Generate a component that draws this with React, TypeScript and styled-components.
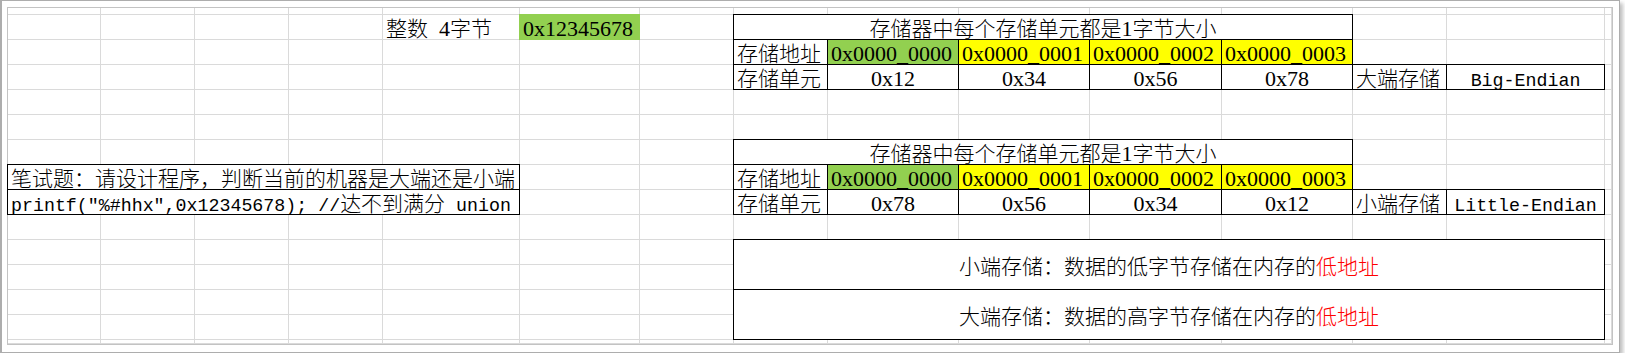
import React from "react";
import styled, { createGlobalStyle, css } from "styled-components";

const GlobalStyle = createGlobalStyle`
  body {
    margin: 0;
    background: #fff;
  }
`;

const COL_WIDTHS = [93, 94, 94, 94, 137, 120, 94, 94, 131, 131, 132, 131, 94, 158, 7];
const ROW_HEIGHTS = [7, 25, 25, 25, 25, 25, 25, 25, 25, 25, 25, 25, 25, 25, 4];

const GREEN = "#92d050";
const YELLOW = "#ffff00";
const GRID = "#dadada";

type Kind = "plain" | "filled" | "boxed";

type Spec = {
  r: number;
  c: number;
  rs?: number;
  cs?: number;
  kind: Kind;
  fill?: string;
  align?: "left" | "center";
  tall?: boolean;
  content: React.ReactNode;
};

const Frame = styled.div`
  box-sizing: border-box;
  width: 1620px;
  height: 353px;
  padding: 6px 6px 7px 5px;
  border: 1px solid #adadad;
  border-left-width: 2px;
  background: #fff;
  box-shadow: 3px 3px 4px rgba(0, 0, 0, 0.25);
`;

const Sheet = styled.div`
  display: grid;
  width: max-content;
  grid-template-columns: ${COL_WIDTHS.map((w) => `${w}px`).join(" ")};
  grid-template-rows: ${ROW_HEIGHTS.map((h) => `${h}px`).join(" ")};
  border: 1px solid #c3c3c3;
  background: #fff;
`;

const GridCell = styled.div`
  box-sizing: border-box;
  border-right: 1px solid ${GRID};
  border-bottom: 1px solid ${GRID};
`;

const DataCell = styled.div<{
  $r: number;
  $c: number;
  $rs: number;
  $cs: number;
  $kind: Kind;
  $fill?: string;
  $align: "left" | "center";
  $tall?: boolean;
}>`
  grid-row: ${(p) => p.$r + 1} / span ${(p) => p.$rs};
  grid-column: ${(p) => p.$c + 1} / span ${(p) => p.$cs};
  box-sizing: border-box;
  min-width: 0;
  padding: 0 3px;
  font-family: "Noto Sans CJK SC", sans-serif;
  font-size: 21px;
  font-weight: 300;
  line-height: 24px;
  color: #000;
  white-space: pre;
  text-align: ${(p) => p.$align};
  background: ${(p) => p.$fill ?? "#fff"};
  ${(p) =>
    p.$kind === "plain"
      ? css`
          border-right: 1px solid ${GRID};
          border-bottom: 1px solid ${GRID};
        `
      : css`
          margin: -1px 0 0 -1px;
          border: 1px solid ${p.$kind === "boxed" ? "#000" : p.$fill};
        `}
  ${(p) =>
    p.$tall &&
    css`
      display: flex;
      align-items: center;
      justify-content: center;
    `}
`;

// digits and hex numbers: serif, half-width
const Latin = styled.span`
  font-family: "Liberation Serif", serif;
  font-size: 22px;
  font-weight: 400;
  word-spacing: 0.25em;
`;

// letter runs: monospaced so they keep the half-width grid
const Mono = styled.span`
  font-family: "Liberation Mono", monospace;
  font-size: 18.3px;
  font-weight: 400;
`;

const Red = styled.span`
  color: #ff0000;
`;

const ADDRESSES = ["0x0000_0000", "0x0000_0001", "0x0000_0002", "0x0000_0003"];

const memoryTable = (top: number, values: string[], label: string, endian: string): Spec[] => [
  {
    r: top,
    c: 7,
    cs: 5,
    kind: "boxed",
    align: "center",
    content: (
      <>
        存储器中每个存储单元都是<Latin>1</Latin>字节大小
      </>
    ),
  },
  { r: top + 1, c: 7, kind: "boxed", content: "存储地址" },
  ...ADDRESSES.map<Spec>((a, i) => ({
    r: top + 1,
    c: 8 + i,
    kind: "boxed",
    fill: i === 0 ? GREEN : YELLOW,
    content: <Latin>{a}</Latin>,
  })),
  { r: top + 2, c: 7, kind: "boxed", content: "存储单元" },
  ...values.map<Spec>((v, i) => ({
    r: top + 2,
    c: 8 + i,
    kind: "boxed",
    align: "center",
    content: <Latin>{v}</Latin>,
  })),
  { r: top + 2, c: 12, kind: "boxed", content: label },
  { r: top + 2, c: 13, kind: "boxed", align: "center", content: <Mono>{endian}</Mono> },
];

const SPECS: Spec[] = [
  {
    r: 1,
    c: 4,
    kind: "plain",
    content: (
      <>
        整数<Latin> 4</Latin>字节
      </>
    ),
  },
  { r: 1, c: 5, kind: "filled", fill: GREEN, content: <Latin>0x12345678</Latin> },
  ...memoryTable(1, ["0x12", "0x34", "0x56", "0x78"], "大端存储", "Big-Endian"),
  ...memoryTable(6, ["0x78", "0x56", "0x34", "0x12"], "小端存储", "Little-Endian"),
  {
    r: 7,
    c: 0,
    cs: 5,
    kind: "boxed",
    content: "笔试题：请设计程序，判断当前的机器是大端还是小端",
  },
  {
    r: 8,
    c: 0,
    cs: 5,
    kind: "boxed",
    content: (
      <>
        <Mono>printf("%#hhx",0x12345678); //</Mono>达不到满分<Mono> union</Mono>
      </>
    ),
  },
  {
    r: 10,
    c: 7,
    rs: 2,
    cs: 7,
    kind: "boxed",
    tall: true,
    content: (
      <>
        小端存储：数据的低字节存储在内存的<Red>低地址</Red>
      </>
    ),
  },
  {
    r: 12,
    c: 7,
    rs: 2,
    cs: 7,
    kind: "boxed",
    tall: true,
    content: (
      <>
        大端存储：数据的高字节存储在内存的<Red>低地址</Red>
      </>
    ),
  },
];

const App = () => {
  const covered = SPECS.reduce((sum, s) => sum + (s.rs ?? 1) * (s.cs ?? 1), 0);
  const emptyCount = COL_WIDTHS.length * ROW_HEIGHTS.length - covered;

  return (
    <>
      <GlobalStyle />
      <Frame>
        <Sheet>
          {/* empty cells fill the free slots by auto-placement */}
          {Array.from({ length: emptyCount }, (_, i) => (
            <GridCell key={`g${i}`} />
          ))}
          {SPECS.map((s) => (
            <DataCell
              key={`${s.r}-${s.c}`}
              $r={s.r}
              $c={s.c}
              $rs={s.rs ?? 1}
              $cs={s.cs ?? 1}
              $kind={s.kind}
              $fill={s.fill}
              $align={s.align ?? "left"}
              $tall={s.tall}
            >
              {s.content}
            </DataCell>
          ))}
        </Sheet>
      </Frame>
    </>
  );
};

export default App;
